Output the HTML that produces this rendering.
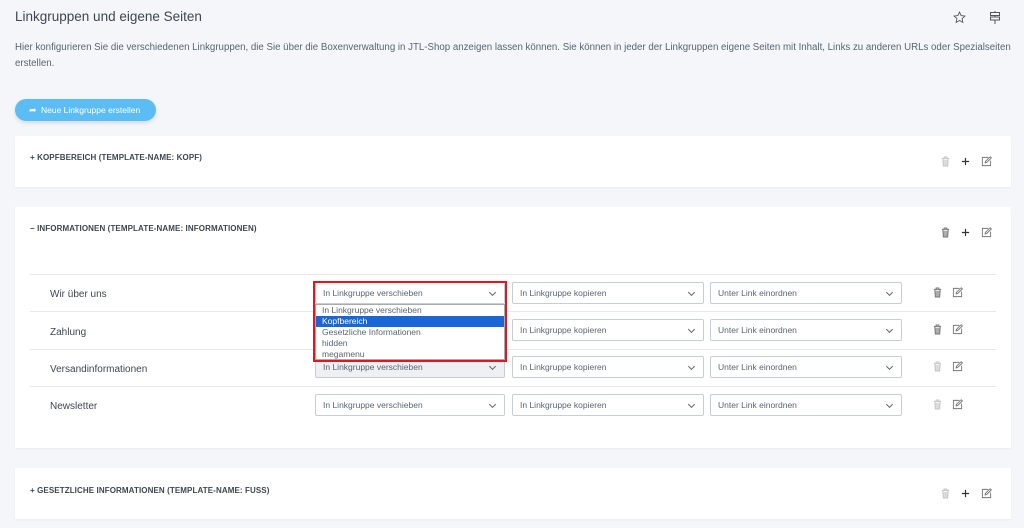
<!DOCTYPE html>
<html><head><meta charset="utf-8"><style>
*{box-sizing:border-box;margin:0;padding:0}
body{width:1024px;height:528px;background:#f5f6fa;font-family:"Liberation Sans",sans-serif;color:#5b6470;position:relative;overflow:hidden}
.abs{position:absolute}
h1{position:absolute;left:15px;top:9px;font-size:13.5px;font-weight:normal;color:#3f4650}
.desc{position:absolute;left:15px;top:40px;width:1005px;font-size:9.7px;line-height:15.5px;color:#5b6470}
.btn{position:absolute;left:15px;top:99px;width:141px;height:22px;border-radius:11px;background:#5cbdf5;color:#fff;font-size:8.5px;line-height:22px;padding-left:26px;box-shadow:0 2px 4px rgba(0,0,0,.12)}
.card{position:absolute;left:15px;width:996px;background:#fff;box-shadow:0 1px 2px rgba(0,0,0,.05)}
.ct{position:absolute;left:15px;font-size:8px;font-weight:bold;color:#3f4650;letter-spacing:.1px}
.row{position:absolute;left:30px;width:966px;border-top:1px solid #e6e8ee;height:37px}
.lbl{position:absolute;font-size:10px;color:#3f4650}
.sel{position:absolute;height:22px;border:1px solid #c8ccd4;border-radius:2px;background:#fff;font-size:8.5px;line-height:20px;padding-left:7px;color:#5b6470}
.sel:after{content:"";position:absolute;right:9px;top:7px;width:4px;height:4px;border-right:1px solid #666;border-bottom:1px solid #666;transform:rotate(45deg)}
.dd{position:absolute;left:315px;top:304px;width:190px;height:56px;background:#fff;border:1px solid #aaa;font-size:8.5px;line-height:11px;color:#5b6470;z-index:3}
.dd div{padding-left:6px;height:11px}
.dd .hl{background:#1a66d6;color:#fff}
svg.i{position:absolute}
</style></head><body>
<svg width="0" height="0" style="position:absolute"><defs>
<symbol id="tr" viewBox="0 0 10 12"><path d="M1 2.5h8M3.5 2.5V1h3v1.5M2 2.5l.6 8.5h4.8L8 2.5" fill="none" stroke="currentColor" stroke-width="1.1"/><path d="M2.4 4h5.2v6.5H2.4z" fill="currentColor" opacity=".6"/></symbol>
<symbol id="ed" viewBox="0 0 12 12"><path d="M8 1.5H1.5v9h9V5" fill="none" stroke="currentColor" stroke-width="1"/><path d="M4.5 7.5l.3-1.6L10 .8l1.3 1.3-5.2 5.1z" fill="none" stroke="currentColor" stroke-width="1"/></symbol>
<symbol id="pl" viewBox="0 0 10 10"><path d="M5 1v8M1 5h8" stroke="currentColor" stroke-width="1.3"/></symbol>
</defs></svg>
<h1>Linkgruppen und eigene Seiten</h1>
<svg class="abs" style="left:953px;top:11px" width="13" height="13" viewBox="0 0 24 24"><path d="M12 2l3 6.5 7 .8-5.2 4.8 1.4 7L12 17.6 5.8 21l1.4-7L2 9.3l7-.8z" fill="none" stroke="#555" stroke-width="1.6"/></svg>
<svg class="abs" style="left:989px;top:11px" width="12" height="13" viewBox="0 0 24 26"><rect x="3" y="3" width="18" height="6" fill="none" stroke="#555" stroke-width="2"/><rect x="3" y="12" width="18" height="6" fill="none" stroke="#555" stroke-width="2"/><path d="M12 0v3M12 9v3M12 18v8" stroke="#555" stroke-width="2"/></svg>
<div class="desc">Hier konfigurieren Sie die verschiedenen Linkgruppen, die Sie über die Boxenverwaltung in JTL-Shop anzeigen lassen können. Sie können in jeder der Linkgruppen eigene Seiten mit Inhalt, Links zu anderen URLs oder Spezialseiten erstellen.</div>
<div class="btn"><span class="abs" style="left:14px;top:0;font-size:9px">➦</span>Neue Linkgruppe erstellen</div>

<div class="card" style="top:136px;height:51px"><div class="ct" style="top:17px">+ KOPFBEREICH (TEMPLATE-NAME: KOPF)</div></div>
<svg class="i" style="left:941px;top:156px;color:#c4c4c4" width="9" height="11"><use href="#tr"/></svg>
<svg class="i" style="left:961px;top:157px;color:#333" width="9" height="9"><use href="#pl"/></svg>
<svg class="i" style="left:981px;top:156px;color:#777" width="11" height="11"><use href="#ed"/></svg>

<div class="card" style="top:207px;height:241px"><div class="ct" style="top:17px">− INFORMATIONEN (TEMPLATE-NAME: INFORMATIONEN)</div></div>
<svg class="i" style="left:941px;top:227px;color:#777" width="9" height="11"><use href="#tr"/></svg>
<svg class="i" style="left:961px;top:228px;color:#333" width="9" height="9"><use href="#pl"/></svg>
<svg class="i" style="left:981px;top:227px;color:#777" width="11" height="11"><use href="#ed"/></svg>

<div class="row" style="top:274px"></div><div class="row" style="top:311px"></div><div class="row" style="top:349px"></div><div class="row" style="top:386px;height:0"></div>

<div class="lbl" style="left:50px;top:289px">Wir über uns</div>
<div class="lbl" style="left:50px;top:327px">Zahlung</div>
<div class="lbl" style="left:50px;top:364px">Versandinformationen</div>
<div class="lbl" style="left:50px;top:401px">Newsletter</div>

<div class="sel" style="left:315px;top:282px;width:190px">In Linkgruppe verschieben</div>
<div class="sel" style="left:512px;top:282px;width:192px">In Linkgruppe kopieren</div>
<div class="sel" style="left:710px;top:282px;width:192px">Unter Link einordnen</div>
<div class="sel" style="left:315px;top:319px;width:190px">In Linkgruppe verschieben</div>
<div class="sel" style="left:512px;top:319px;width:192px">In Linkgruppe kopieren</div>
<div class="sel" style="left:710px;top:319px;width:192px">Unter Link einordnen</div>
<div class="sel" style="left:315px;top:356px;width:190px;background:#eef0f4">In Linkgruppe verschieben</div>
<div class="sel" style="left:512px;top:356px;width:192px">In Linkgruppe kopieren</div>
<div class="sel" style="left:710px;top:356px;width:192px">Unter Link einordnen</div>
<div class="sel" style="left:315px;top:394px;width:190px">In Linkgruppe verschieben</div>
<div class="sel" style="left:512px;top:394px;width:192px">In Linkgruppe kopieren</div>
<div class="sel" style="left:710px;top:394px;width:192px">Unter Link einordnen</div>

<div class="dd"><div>In Linkgruppe verschieben</div><div class="hl">Kopfbereich</div><div>Gesetzliche Informationen</div><div>hidden</div><div>megamenu</div></div>
<div class="abs" style="left:313px;top:281px;width:194px;height:81px;border:2px solid #e8141b;z-index:4"></div>

<svg class="i" style="left:933px;top:287px;color:#777" width="9" height="11"><use href="#tr"/></svg><svg class="i" style="left:952px;top:287px;color:#777" width="11" height="11"><use href="#ed"/></svg>
<svg class="i" style="left:933px;top:324px;color:#777" width="9" height="11"><use href="#tr"/></svg><svg class="i" style="left:952px;top:324px;color:#777" width="11" height="11"><use href="#ed"/></svg>
<svg class="i" style="left:933px;top:361px;color:#c4c4c4" width="9" height="11"><use href="#tr"/></svg><svg class="i" style="left:952px;top:361px;color:#777" width="11" height="11"><use href="#ed"/></svg>
<svg class="i" style="left:933px;top:399px;color:#c4c4c4" width="9" height="11"><use href="#tr"/></svg><svg class="i" style="left:952px;top:399px;color:#777" width="11" height="11"><use href="#ed"/></svg>

<div class="card" style="top:468px;height:51px"><div class="ct" style="top:18px">+ GESETZLICHE INFORMATIONEN (TEMPLATE-NAME: FUSS)</div></div>
<svg class="i" style="left:941px;top:488px;color:#c4c4c4" width="9" height="11"><use href="#tr"/></svg>
<svg class="i" style="left:961px;top:489px;color:#333" width="9" height="9"><use href="#pl"/></svg>
<svg class="i" style="left:981px;top:488px;color:#777" width="11" height="11"><use href="#ed"/></svg>
</body></html>
